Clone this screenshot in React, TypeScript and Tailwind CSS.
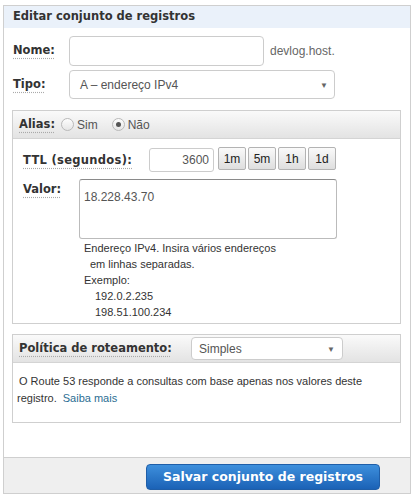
import React from "react";

const verdana = "font-['DejaVu_Sans',Verdana,sans-serif]";
const arial = "font-['Liberation_Sans',Arial,sans-serif]";

function Label({ children, className = "" }: { children: React.ReactNode; className?: string }) {
  return (
    <span
      className={`${verdana} font-bold text-[11.5px] text-[#333] underline decoration-dotted decoration-[#aaa] underline-offset-[4px] ${className}`}
    >
      {children}
    </span>
  );
}

function Radio({ checked, label }: { checked?: boolean; label: string }) {
  return (
    <span className="flex items-center">
      <span className="flex h-[13px] w-[13px] items-center justify-center rounded-full border border-[#b9b9b9] bg-gradient-to-b from-[#fdfdfd] to-[#e6e6e6]">
        {checked && <span className="h-[5px] w-[5px] rounded-full bg-[#555]" />}
      </span>
      <span className={`${arial} ml-[3px] text-[12px] text-[#555]`}>{label}</span>
    </span>
  );
}

function Arrow() {
  return <span className="text-[8px] leading-none text-[#666]">▼</span>;
}

function TtlButton({ children }: { children: React.ReactNode }) {
  return (
    <button className={`${arial} flex h-[23px] w-[28px] items-center justify-center rounded-[2px] border border-[#b3b3b3] bg-gradient-to-b from-[#fafafa] to-[#dedede] text-[12px] text-[#222]`}>
      {children}
    </button>
  );
}

export default function App() {
  return (
    <div className="bg-white pt-[5px] pl-[3px] h-[498px]">
      <div className="w-[408px] border border-[#cfcfcf]">
        <div className={`${verdana} flex h-[22px] items-center bg-[#eaf1fa] pl-[9px] text-[11.5px] font-bold text-[#333]`}>
          Editar conjunto de registros
        </div>

        <div className="pl-[8px] pt-[8px] pb-[34px]">
          <div className="flex h-[30px] items-center">
            <Label className="ml-[1px] w-[56px]">Nome:</Label>
            <div className="h-[30px] w-[195px] rounded-[4px] border border-[#ccc] bg-white" />
            <span className={`${arial} ml-[6px] text-[12px] text-[#666]`}>devlog.host.</span>
          </div>

          <div className="mt-[4px] flex h-[29px] items-center">
            <Label className="ml-[1px] w-[56px]">Tipo:</Label>
            <div className="flex h-[29px] w-[266px] items-center justify-between rounded-[4px] border border-[#ccc] bg-white pl-[10px] pr-[6px]">
              <span className={`${arial} text-[12px] text-[#555]`}>A – endereço IPv4</span>
              <Arrow />
            </div>
          </div>

          <div className="mt-[11px] w-[389px] border border-[#cfcfcf]">
            <div className="flex h-[28px] items-center border-b border-[#d4d4d4] bg-gradient-to-b from-[#fafafa] to-[#e3e3e3] pl-[6px]">
              <Label>Alias:</Label>
              <span className="ml-[6px]">
                <Radio label="Sim" />
              </span>
              <span className="ml-[14px]">
                <Radio checked label="Não" />
              </span>
            </div>

            <div className="pl-[10px] pt-[8px] pb-[3px]">
              <div className="flex items-start">
                <Label className="mt-[5px] w-[126px] tracking-[0.3px]">TTL (segundos):</Label>
                <div className={`${arial} mt-[1px] flex h-[24px] w-[65px] items-center justify-end rounded-[3px] border border-[#ccc] pr-[4px] text-[12px] text-[#555]`}>
                  3600
                </div>
                <div className="ml-[4px] flex gap-[2px]">
                  <TtlButton>1m</TtlButton>
                  <TtlButton>5m</TtlButton>
                  <TtlButton>1h</TtlButton>
                  <TtlButton>1d</TtlButton>
                </div>
              </div>

              <div className="mt-[7px] flex items-start">
                <Label className="mt-[2px] w-[56px]">Valor:</Label>
                <div className="h-[60px] w-[258px] rounded-[3px] border border-[#bbb] border-t-[#8a8a8a] pl-[4px] pt-[3px]">
                  <span className={`${arial} text-[12px] text-[#555]`}>18.228.43.70</span>
                </div>
              </div>

              <div className={`${arial} ml-[61px] mt-[1px] text-[11px] leading-[16px] text-[#333]`}>
                <div>Endereço IPv4. Insira vários endereços</div>
                <div className="pl-[6px]">em linhas separadas.</div>
                <div>Exemplo:</div>
                <div className="pl-[11px]">192.0.2.235</div>
                <div className="pl-[11px]">198.51.100.234</div>
              </div>
            </div>
          </div>

          <div className="mt-[10px] w-[389px] border border-[#cfcfcf]">
            <div className="flex h-[28px] items-center border-b border-[#d4d4d4] bg-gradient-to-b from-[#fafafa] to-[#e3e3e3] pl-[6px]">
              <Label className="w-[172px]">Política de roteamento:</Label>
              <div className="flex h-[23px] w-[152px] items-center justify-between rounded-[4px] border border-[#ccc] bg-white pl-[7px] pr-[7px]">
                <span className={`${arial} text-[12px] text-[#555]`}>Simples</span>
                <Arrow />
              </div>
            </div>
            <div className={`${arial} pl-[4px] pt-[10px] pb-[15px] text-[11px] leading-[17px] text-[#333]`}>
              <div className="pl-[2px]">O Route 53 responde a consultas com base apenas nos valores deste</div>
              <div className="flex">
                <span>registro.</span>
                <span className="ml-[6px] text-[#2b6e93]">Saiba mais</span>
              </div>
            </div>
          </div>
        </div>

        <div className="flex h-[36px] justify-end border-t border-[#cfcfcf] bg-[#efefef] pr-[30px] pt-[6px]">
          <button className={`${verdana} h-[26px] w-[234px] rounded-[4px] border border-[#1f5ea8] bg-gradient-to-b from-[#3d8fdc] to-[#1b62b6] text-[12.5px] font-bold text-white`}>
            Salvar conjunto de registros
          </button>
        </div>
      </div>
    </div>
  );
}
